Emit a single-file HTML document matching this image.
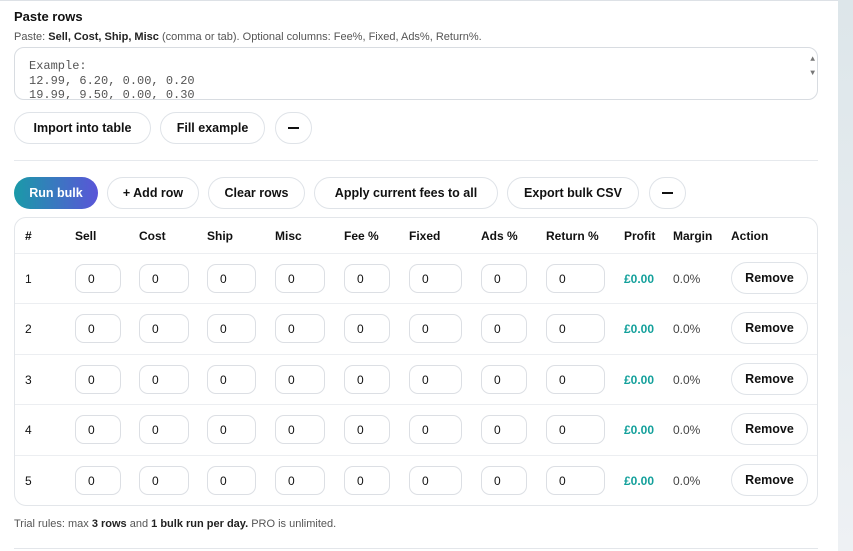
<!DOCTYPE html>
<html><head><style>
*{box-sizing:border-box;margin:0;padding:0}
body{width:853px;height:551px;background:#fff;font-family:"Liberation Sans",Arial,sans-serif;color:#111;position:relative;overflow:hidden}
.a{position:absolute}
.btn{position:absolute;height:32px;border:1px solid #dfe3e8;border-radius:16px;background:#fff;font-weight:bold;font-size:12.5px;display:flex;align-items:center;justify-content:center;color:#111}
.th{position:absolute;top:229px;font-weight:bold;font-size:12px}
.inp{position:absolute;height:29px;border:1px solid #dcdfe4;border-radius:9px;font-size:12px;padding-left:12px;display:flex;align-items:center}
.cell{position:absolute;font-size:12px}
.dash{display:block;width:11px;height:2px;background:#111}
</style></head><body>
<div class="a" style="left:0;top:0;width:838px;height:1px;background:#dde1e6"></div>
<div class="a" style="left:838px;top:0;width:15px;height:551px;background:linear-gradient(#dde6ea,#eef1f4)"></div>
<div class="a" style="left:14px;top:9px;font-weight:bold;font-size:13px">Paste rows</div>
<div class="a" style="left:14px;top:31px;font-size:11px;color:#555">Paste: <b style="color:#222">Sell, Cost, Ship, Misc</b> (comma or tab). Optional columns: Fee%, Fixed, Ads%, Return%.</div>
<div class="a" style="left:14px;top:47px;width:804px;height:53px;border:1px solid #d8dce1;border-radius:10px;overflow:hidden;font-family:'Liberation Mono',monospace;font-size:12px;color:#555;line-height:14.5px;padding:11px 0 0 14px">Example:<br>12.99, 6.20, 0.00, 0.20<br>19.99, 9.50, 0.00, 0.30
<div class="a" style="right:2px;top:5px;font-size:8px;color:#777;line-height:14px">▲<br>▼</div></div>
<div class="btn" style="left:14px;top:112px;width:137px">Import into table</div>
<div class="btn" style="left:160px;top:112px;width:105px">Fill example</div>
<div class="btn" style="left:275px;top:112px;width:37px"><span class="dash"></span></div>
<div class="a" style="left:14px;top:160px;width:804px;height:1px;background:#e6e9ed"></div>
<div class="btn" style="left:14px;top:177px;width:84px;border:none;color:#fff;background:linear-gradient(90deg,#1a9aa8,#5a55d8)">Run bulk</div>
<div class="btn" style="left:107px;top:177px;width:92px">+ Add row</div>
<div class="btn" style="left:208px;top:177px;width:97px">Clear rows</div>
<div class="btn" style="left:314px;top:177px;width:184px">Apply current fees to all</div>
<div class="btn" style="left:507px;top:177px;width:132px">Export bulk CSV</div>
<div class="btn" style="left:649px;top:177px;width:37px"><span class="dash"></span></div>
<div class="a" style="left:14px;top:217px;width:804px;height:289px;border:1px solid #e3e6ea;border-radius:12px"></div>
<div class="th" style="left:25px">#</div><div class="th" style="left:75px">Sell</div><div class="th" style="left:139px">Cost</div><div class="th" style="left:207px">Ship</div><div class="th" style="left:275px">Misc</div><div class="th" style="left:344px">Fee %</div><div class="th" style="left:409px">Fixed</div><div class="th" style="left:481px">Ads %</div><div class="th" style="left:546px">Return %</div><div class="th" style="left:624px">Profit</div><div class="th" style="left:673px">Margin</div><div class="th" style="left:731px">Action</div>
<div id="rows"></div>
<script>
var ys=[278,328,379,429,480],h='';
var cols=[[75,46],[139,50],[207,49],[275,50],[344,46],[409,53],[481,46],[546,59]];
ys.forEach(function(y,i){
 h+='<div class="a" style="left:15px;top:'+(y-25)+'px;width:802px;height:1px;background:#eceef1"></div>';
 h+='<div class="cell" style="left:25px;top:'+(y-6)+'px">'+(i+1)+'</div>';
 cols.forEach(function(c){h+='<div class="inp" style="left:'+c[0]+'px;top:'+(y-14)+'px;width:'+c[1]+'px">0</div>';});
 h+='<div class="cell" style="left:624px;top:'+(y-6)+'px;color:#13a09b;font-weight:bold">£0.00</div>';
 h+='<div class="cell" style="left:673px;top:'+(y-6)+'px;color:#444">0.0%</div>';
 h+='<div class="btn" style="left:731px;top:'+(y-16)+'px;width:77px">Remove</div>';
});
document.getElementById('rows').innerHTML=h;
</script>
<div class="a" style="left:14px;top:518px;font-size:11px;color:#555">Trial rules: max <b style="color:#222">3 rows</b> and <b style="color:#222">1 bulk run per day.</b> PRO is unlimited.</div>
<div class="a" style="left:14px;top:548px;width:804px;height:1px;background:#e3e6ea"></div>
</body></html>
